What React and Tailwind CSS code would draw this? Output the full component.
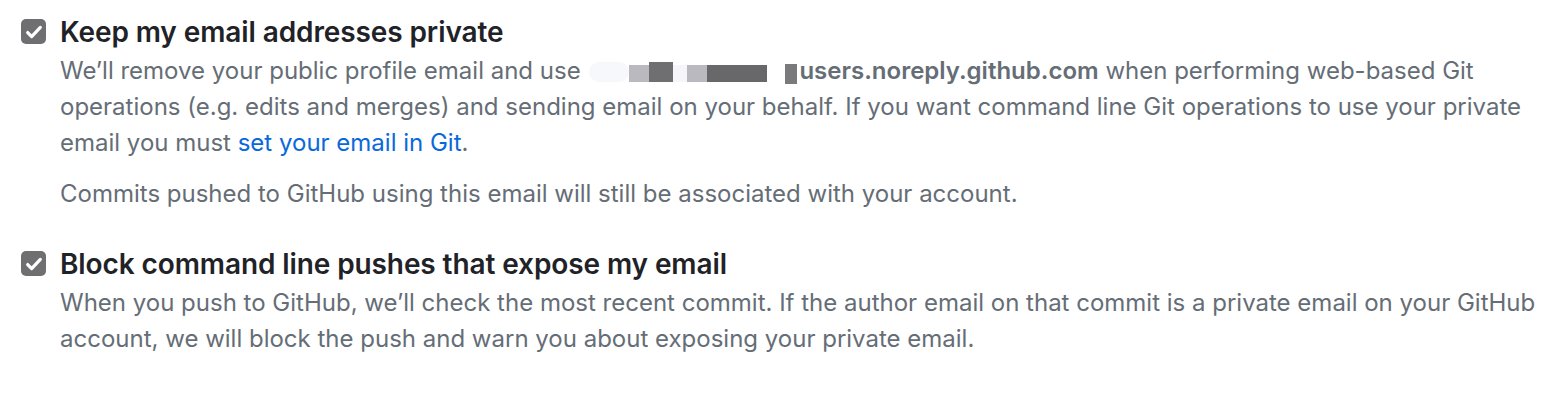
const FONT = { fontFamily: 'Inter, "Noto Sans", sans-serif' };

function Check() {
  return (
    <div className="w-[25px] h-[25px] rounded-[5px] bg-[#6f6f72] flex items-center justify-center shrink-0">
      <svg width="22" height="22" viewBox="0 0 16 16" fill="none">
        <path d="M3.4 8.4l2.9 3L12.6 4.6" stroke="#fff" strokeWidth="2.3" strokeLinecap="round" strokeLinejoin="round" />
      </svg>
    </div>
  );
}

function Redacted() {
  return (
    <span className="inline-block relative w-[208px] h-[20px] align-[-3px] mx-[2px]">
      <span className="absolute left-0 top-0 flex items-start">
        <span className="w-[40px] h-[20px] bg-[#f7f8fb] rounded-full" />
        <span className="w-[20px] h-[17px] mt-[3px] bg-[#b9b9bf]" />
        <span className="w-[24px] h-[20px] bg-[#6f6f72]" />
        <span className="w-[14px] h-[17px] mt-[3px] bg-[#f6f6fa]" />
        <span className="w-[20px] h-[17px] mt-[3px] bg-[#b9b9bf]" />
        <span className="w-[60px] h-[17px] mt-[3px] bg-[#68686b]" />
        <span className="w-[18px]" />
        <span className="w-[12px] h-[20px] mt-[2px] bg-[#7a7a7d]" />
      </span>
    </span>
  );
}

function Item({ title, children, className = '' }) {
  return (
    <div className={`flex gap-[14px] ${className}`}>
      <div className="pt-[5px]">
        <Check />
      </div>
      <div className="w-[1490px]">
        <div className="text-[28px] leading-[36px] font-semibold tracking-[-0.1px] text-[#1f2328]">{title}</div>
        <div className="mt-[3px] text-[24px] leading-[36px] text-[#656d76]">{children}</div>
      </div>
    </div>
  );
}

export default function App() {
  return (
    <div className="w-[1566px] h-[404px] bg-white pl-[21px] pt-[14px]" style={FONT}>
      <Item title="Keep my email addresses private">
        <p>
          We’ll remove your public profile email and use <Redacted />
          <span className="font-semibold">users.noreply.github.com</span> when performing web-based Git
          operations (e.g. edits and merges) and sending email on your behalf. If you want command line Git
          operations to use your private email you must{' '}
          <a href="#" className="text-[#0969da]">set your email in Git</a>.
        </p>
        <p className="mt-[15px]">Commits pushed to GitHub using this email will still be associated with your account.</p>
      </Item>
      <Item title="Block command line pushes that expose my email" className="mt-[34px]">
        <p>
          When you push to GitHub, we’ll check the most recent commit. If the author email on that commit is a
          private email on your GitHub account, we will block the push and warn you about exposing your private
          email.
        </p>
      </Item>
    </div>
  );
}
